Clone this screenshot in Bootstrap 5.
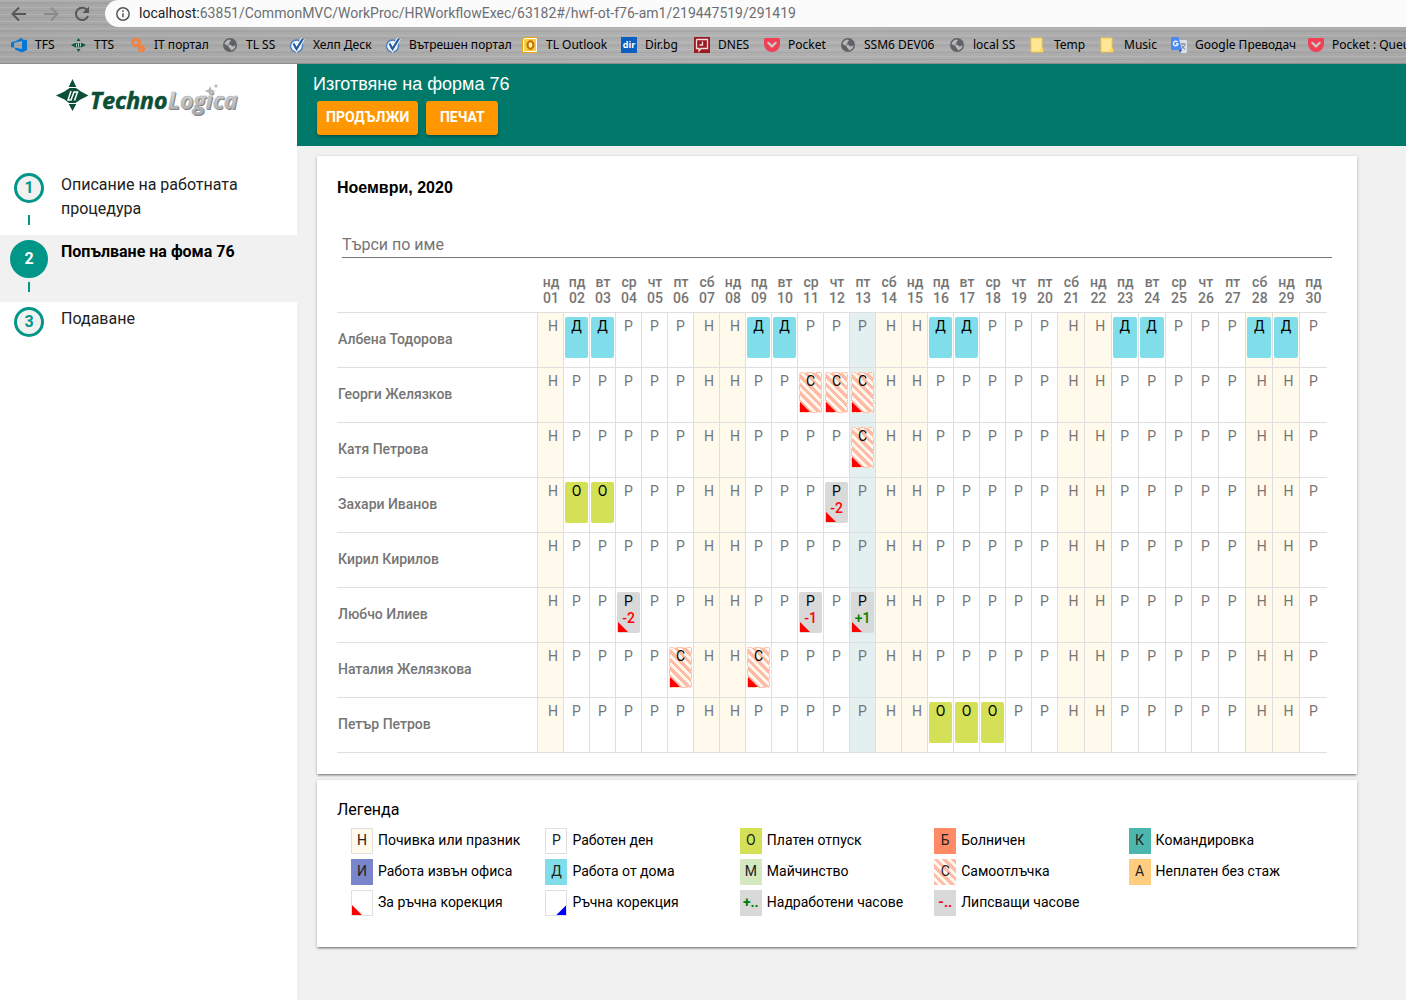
<!DOCTYPE html>
<html lang="bg">
<head>
<meta charset="utf-8">
<meta name="viewport" content="width=device-width, initial-scale=1">
<title>Изготвяне на форма 76</title>
<link href="https://cdn.jsdelivr.net/npm/bootstrap@5.3.0/dist/css/bootstrap.min.css" rel="stylesheet">
<style>
  body { font-family: Roboto, "Noto Sans", sans-serif; font-size: 14px; color: #000; background: #f1f1f1; }

  /* browser chrome */
  .chrome-bar { height: 64px; border-bottom: 1px solid #8c8c8c; font-family: "Noto Sans", sans-serif;
    background:
      repeating-linear-gradient(180deg, rgba(255,255,255,.12) 0 1px, transparent 1px 3px, rgba(0,0,0,.05) 3px 4px, transparent 4px 7px),
      linear-gradient(90deg, #a6a6a6, #b0b0b0 50%, #a8a8a8); }
  .nav-tools { width: 105px; padding-left: 10px; }
  .nav-tools button { width: 32px; line-height: 0; }
  .address { height: 27px; border-radius: 14px 0 0 14px; background: #fbfbfb; padding-left: 10px; font-family: Roboto, sans-serif; font-size: 14px; }
  .address .host { color: #202124; }
  .address .path { color: #6b6f73; }
  .bookmarks { display: grid; height: 36px; padding-left: 11px; align-items: center;
    grid-template-columns: 60px 60px 91px 67px 96px 137px 99px 73px 70px 76px 109px 81px 70px 71px 137px 1fr; }
  .bookmarks a { display: flex; align-items: center; gap: 8px; font-size: 12px; line-height: 16px; color: #000; text-decoration: none; white-space: nowrap; }
  .bookmarks svg { flex: none; }

  /* side navigation */
  .side { width: 297px; background: #fff; }
  .logo { padding: 10px 0 0 52px; height: 104px; }
  .step-item { display: flex; gap: 12px; min-height: 67px; padding: 5px 20px 0 9px; color: #212121; text-decoration: none; font-size: 16px; line-height: 24px; }
  .step-item.current { background: #f1f1f1; color: #000; font-weight: 700; }
  .step-rail { display: grid; flex: none; width: 40px; grid-template-rows: 42px 10px; justify-items: center; align-items: start; align-content: start; }
  .step-dot { width: 30px; height: 30px; border: 3px solid #009688; border-radius: 50%; background: #f1f1f1; color: #009688; font-weight: 700; line-height: 24px; text-align: center; }
  .current .step-dot { width: 38px; height: 38px; background: #009688; color: #fff; line-height: 32px; }
  .step-line { width: 2px; height: 10px; background: #009688; }

  /* page head */
  .page-head { background: #00796b; height: 82px; padding: 8px 16px 0; }
  .page-head h1 { font-family: "Liberation Sans", sans-serif; font-size: 18px; line-height: 24px; font-weight: 400; color: #fff; margin: 0 0 5px; }
  .btn-act { height: 34px; min-width: 72px; padding: 0 9px 2px; border: 0; border-radius: 3px; background: #ff9800; color: #fff; font-size: 14px; font-weight: 700; line-height: 32px; box-shadow: 0 2px 3px rgba(0,0,0,.3); }
  .btn-act:hover { background: #fb8c00; color: #fff; }

  .panels { padding: 10px 49px 0 20px; }
  .panel { background: #fff; box-shadow: 0 2px 2px -1px rgba(0,0,0,.4), 0 1px 3px rgba(0,0,0,.25); }
  .panel-month { padding: 20px 30px 21px 20px; margin-bottom: 6px; }
  .panel-month h2 { font-family: "Liberation Sans", sans-serif; font-size: 16px; line-height: 24px; font-weight: 700; margin: 0 0 32px; }
  .search { margin: 0 -5px 12px 5px; }
  .search input { display: block; width: 100%; height: 26px; border: 0; border-bottom: 1px solid #757575; padding: 0; font-size: 16px; outline: 0; }
  .search input::placeholder { color: #757575; opacity: 1; }

  .sheet { width: 100%; table-layout: fixed; border-collapse: separate; border-spacing: 0; color: #757575; }
  .sheet .c-name { width: 201px; }
  .sheet .c-day { width: 26px; }
  .sheet th, .sheet td { padding: 0; border-bottom: 1px solid #dfdfdf; }
  .sheet thead th { height: 43px; padding-top: 4px; font-weight: 500; font-size: 14px; line-height: 16px; text-align: center; vertical-align: top; }
  .sheet tbody th { height: 55px; font-weight: 500; vertical-align: middle; border-right: 1px solid #dfdfdf; padding: 0 0 2px 1px; }
  .sheet td { height: 55px; vertical-align: top; border-right: 1px solid #dfdfdf; text-align: center; padding: 4px 1px 0; line-height: 18px; }
  .sheet td:last-child { border-right: 0; }
  .sheet td.off { background: #fffaec; }
  .sheet td.today { background: #e4f0f0; }
  .sheet td.off > span { padding-left: 5px; }
  .chip { position: relative; height: 41px; border-radius: 2px; color: #000; line-height: 18px; }
  .chip b { display: block; font-weight: 500; line-height: 16px; }
  .k-home { background: #80deea; }
  .k-leave { background: #d4e157; }
  .k-hours { background: #d9d9d9; }
  .k-absent { background: repeating-linear-gradient(45deg, #ffbba5 0 3px, #fff8ee 3px 6px); }
  .chip.k-absent { border: 1px dashed #ffccbb; line-height: 17px; }
  .k-off { background: #fffaec; border: 1px solid #dfdfdf; }
  .k-work { background: #fff; border: 1px solid #dfdfdf; }
  .k-sick { background: #ff8a65; }
  .k-trip { background: #4db6ac; }
  .k-out { background: #7986cb; }
  .k-mother { background: #d4e9c0; }
  .k-unpaid { background: #ffcc80; }
  .plus { color: #008000; }
  .minus { color: #f00; }
  /* corner marks lie over the chip */
  .mark-red::after, .mark-blue::after { content: ""; position: absolute; bottom: 0; width: 10px; height: 10px; }
  .mark-red::after { left: 0; background: #f00; clip-path: polygon(0 0, 100% 100%, 0 100%); }
  .mark-blue::after { right: 0; background: #00f; clip-path: polygon(100% 0, 100% 100%, 0 100%); }
  .chip.k-hours.mark-red::after { left: 1px; bottom: 1px; }

  .panel-legend { padding: 18px 20px 31px; }
  .panel-legend h2 { font-size: 16px; line-height: 24px; font-weight: 400; margin: 0 0 6px; }
  .legend { display: grid; grid-template-columns: repeat(5, 1fr); row-gap: 5px; margin: 0 14px; padding: 0; list-style: none; }
  .legend li { display: flex; align-items: flex-start; gap: 5px; font-size: 14px; line-height: 24px; white-space: nowrap; }
  .key { position: relative; width: 22px; height: 26px; text-align: center; line-height: 25px; color: #222; }
  .key.k-off, .key.k-work { line-height: 23px; }
  .key.plus { color: #008000; font-weight: 700; }
  .key.minus { color: #f00; font-weight: 700; }
</style>
</head>
<body class="d-flex flex-column min-vh-100">

<svg class="d-none" xmlns="http://www.w3.org/2000/svg">
  <symbol id="i-globe" viewBox="0 0 16 16"><circle cx="8" cy="8" r="7" fill="#5f6368"/><path d="M2.500 7C3 4.500 5 2.700 7.500 2.500L9 3.500 7.500 5v1.500L5.500 7.500 9 8l1 1.500 2.500-.5L13.500 8c0 3-2 5-4.500 5.500L8.500 12 7 10.500 6.500 9z" fill="#b9b9b9"/></symbol>
  <symbol id="i-check" viewBox="0 0 16 16"><circle cx="7.500" cy="9" r="6" fill="#e8f1fa" stroke="#4f7fb8" stroke-width="1.400"/><path d="M4.500 6.500 7.500 12 14 1.500" fill="none" stroke="#fff" stroke-width="4"/><path d="M4.500 6.500 7.500 12 14 1.500" fill="none" stroke="#235a9f" stroke-width="2.200"/></symbol>
  <symbol id="i-pocket" viewBox="0 0 16 16"><path d="M1.500 1h13A1.500 1.500 0 0 1 16 2.500V7a8 8 0 0 1-16 0V2.500A1.500 1.500 0 0 1 1.500 1z" fill="#ef4056"/><path d="m4.300 5.800 3.700 3.600 3.700-3.600" fill="none" stroke="#c9c9c9" stroke-width="2.200" stroke-linecap="round" stroke-linejoin="round"/></symbol>
  <symbol id="i-folder" viewBox="0 0 16 16"><path d="M1 1h11v10l1 1v3H1z" fill="#ffe793" stroke="#f0c94c"/><path d="M9.500 14.500v-2.500h3.500v3z" fill="#ffd75e"/></symbol>
</svg>

<header class="chrome-bar flex-shrink-0 overflow-hidden">
  <div class="d-flex">
    <div class="nav-tools d-flex align-items-center flex-shrink-0">
      <button class="btn p-0 border-0 text-start" aria-label="Назад"><svg width="18" height="18" viewBox="0 0 18 18" fill="none" stroke="#55585b" stroke-width="2"><path d="M16 9H3M9 2.500 2.500 9 9 15.500"/></svg></button>
      <button class="btn p-0 border-0 text-start" aria-label="Напред"><svg width="18" height="18" viewBox="0 0 18 18" fill="none" stroke="#8b8b8b" stroke-width="2"><path d="M2 9h13M9 2.500 15.500 9 9 15.500"/></svg></button>
      <button class="btn p-0 border-0 text-start" aria-label="Презареди"><svg width="18" height="18" viewBox="0 0 18 18"><path d="M14.200 5.200A6.200 6.200 0 1 0 15 11" fill="none" stroke="#55585b" stroke-width="2"/><path d="M16 1.500V8H9.500z" fill="#55585b"/></svg></button>
    </div>
    <div class="address d-flex align-items-center flex-grow-1">
      <svg class="me-2" width="16" height="16" viewBox="0 0 16 16" fill="none" stroke="#55585b" stroke-width="1.500"><circle cx="8" cy="8" r="6.200"/><path d="M8 7.200v4M8 4.300v1.600"/></svg>
      <span class="host">localhost:</span><span class="path">63851/CommonMVC/WorkProc/HRWorkflowExec/63182#/hwf-ot-f76-am1/219447519/291419</span>
    </div>
  </div>
  <nav class="bookmarks" aria-label="Отметки">
    <a href="#"><svg width="16" height="16" viewBox="0 0 16 16"><path fill="#0078d7" fill-rule="evenodd" d="M0 5.500 5 4l6-3.500v1.800l5 1V13l-5 2.500-7-3v-1.500L0 10zM3 6v4.500l8 1.500V4z"/></svg>TFS</a>
    <a href="#"><svg width="15" height="16" viewBox="0 0 15 16"><path fill="#0d5a3c" d="m7.500 1 2 3h-4zM7.500 15l2-3h-4zM0 8l4-2h7l4 2-4 2.200H4z"/><path d="M5.500 9.800V6.500M7.500 10V6M9.500 9.500V6.200" stroke="#a9c9b8"/></svg>TTS</a>
    <a href="#"><svg width="15" height="16" viewBox="0 0 15 16" fill="none" stroke="#f4803c"><circle cx="5" cy="5.500" r="3" stroke-width="2.200"/><circle cx="5" cy="5.500" r="4.300" stroke-width="1.600" stroke-dasharray="2 1.400"/><circle cx="10.500" cy="11.500" r="2" stroke-width="2"/><circle cx="10.500" cy="11.500" r="3.200" stroke-width="1.400" stroke-dasharray="1.600 1"/></svg>IT портал</a>
    <a href="#"><svg width="16" height="16"><use href="#i-globe"/></svg>TL SS</a>
    <a href="#"><svg width="16" height="16"><use href="#i-check"/></svg>Хелп Деск</a>
    <a href="#"><svg width="16" height="16"><use href="#i-check"/></svg>Вътрешен портал</a>
    <a href="#"><svg width="16" height="16" viewBox="0 0 16 16"><path fill="#e8a317" d="M2 0h14v16H0V2z"/><path d="M2.500 1.500h12v13h-13V3z" fill="#f8d048" stroke="#fff"/><ellipse cx="8.500" cy="8" rx="3" ry="3.800" fill="#fff3c4" stroke="#c77400" stroke-width="2.200"/></svg>TL Outlook</a>
    <a href="#"><svg width="16" height="16" viewBox="0 0 16 16"><path fill="#0a5fc0" d="M0 0h16v16H0z"/><text x="8" y="11" text-anchor="middle" font-family="Open Sans, sans-serif" font-weight="700" font-size="9" fill="#fff">dir</text></svg>Dir.bg</a>
    <a href="#"><svg width="16" height="16" viewBox="0 0 16 16"><path fill="#9b1b22" d="M0 0h16v16H0z"/><path d="M3 2.500h10.500v9H7l-2 2.500v-2.500H2.500V3zM8.500 4.500V8H5.500" fill="none" stroke="#f3dcdc" stroke-width="1.300"/></svg>DNES</a>
    <a href="#"><svg width="16" height="16"><use href="#i-pocket"/></svg>Pocket</a>
    <a href="#"><svg width="16" height="16"><use href="#i-globe"/></svg>SSM6 DEV06</a>
    <a href="#"><svg width="16" height="16"><use href="#i-globe"/></svg>local SS</a>
    <a href="#"><svg width="16" height="16"><use href="#i-folder"/></svg>Temp</a>
    <a href="#"><svg width="16" height="16"><use href="#i-folder"/></svg>Music</a>
    <a href="#"><svg width="16" height="16" viewBox="0 0 16 16"><path d="M6 3h9a1 1 0 0 1 1 1v11a1 1 0 0 1-1 1H9z" fill="#dcdfe3"/><path d="M9.500 7h5M12 6v1M14 7.500c-.8 2-2 3.200-3.800 4.500M10.500 8.500l3.500 4" stroke="#6b7f8a" fill="none"/><path d="M1 0h6.500L11 13H1a1 1 0 0 1-1-1V1a1 1 0 0 1 1-1z" fill="#4a8af4"/><path d="M8 13h3l-2 3z" fill="#2a50b8"/><path d="M6.500 5A2.300 2.300 0 1 0 7 6.800H4.800" fill="none" stroke="#fff" stroke-width="1.200"/></svg>Google Преводач</a>
    <a href="#"><svg width="16" height="16"><use href="#i-pocket"/></svg>Pocket : Queu</a>
  </nav>
</header>

<div class="d-flex flex-grow-1">
  <aside class="side flex-shrink-0">
    <div class="logo">
      <svg width="190" height="48" viewBox="0 0 190 48" role="img" aria-label="TechnoLogica">
        <defs><linearGradient id="silver" x1="0" y1="0" x2="0" y2="1"><stop offset="0" stop-color="#e6e6e6"/><stop offset="1" stop-color="#a3a5a8"/></linearGradient></defs>
        <path fill="#0b4f37" d="m20.500 5 3.800 8h-7.600zM20.500 37l3.800-7h-7.600zM4 21.500l8.500-4 5-3.500h6.500l5 3.500 7.500 4-8 4-5 3.500H17l-4.500-3.500z"/>
        <path d="m19 17-3 9h3l3-8h3.500l-3 8.500" fill="none" stroke="#fff" stroke-width="1.500"/>
        <g font-family="Open Sans, sans-serif" font-style="italic" font-weight="700" font-size="23">
          <text x="38" y="35" fill="#0b4f37" stroke="#0b4f37" stroke-width=".6">Techno</text>
          <text x="117" y="36" fill="#77797c">Logica</text>
          <text x="116" y="35" fill="url(#silver)" stroke="#a9abad" stroke-width=".5">Logica</text>
        </g>
        <path d="m158 12 1.500 3.500 4 1.500-4 1.500L158 22l-1.500-3.500-4-1.500 4-1.500zM164 9.500l.8 1.700 1.700.8-1.700.8-.8 1.700-.8-1.700-1.700-.8 1.700-.8z" fill="#b5b7ba"/>
      </svg>
    </div>
    <nav aria-label="Стъпки">
      <a class="step-item" href="#"><span class="step-rail"><span class="step-dot">1</span><span class="step-line"></span></span><span>Описание на работната процедура</span></a>
      <a class="step-item current" href="#" aria-current="step"><span class="step-rail"><span class="step-dot">2</span><span class="step-line"></span></span><span>Попълване на фома 76</span></a>
      <a class="step-item" href="#"><span class="step-rail"><span class="step-dot">3</span></span><span>Подаване</span></a>
    </nav>
  </aside>

  <main class="flex-grow-1">
    <div class="page-head">
      <h1>Изготвяне на форма 76</h1>
      <div class="d-flex gap-2 ps-1">
        <button type="button" class="btn btn-act">ПРОДЪЛЖИ</button>
        <button type="button" class="btn btn-act">ПЕЧАТ</button>
      </div>
    </div>
    <div class="panels">
      <section class="panel panel-month">
        <h2>Ноември, 2020</h2>
        <div class="search">
          <label class="visually-hidden" for="find">Търси по име</label>
          <input id="find" type="text" placeholder="Търси по име">
        </div>
        <table class="sheet">
          <colgroup><col class="c-name"><col class="c-day" span="20"><col span="10"></colgroup>
          <thead><tr id="days"><th></th></tr></thead>
          <tbody id="people"></tbody>
        </table>
      </section>

      <section class="panel panel-legend">
        <h2>Легенда</h2>
        <ul class="legend">
          <li><span class="key k-off">Н</span>Почивка или празник</li>
          <li><span class="key k-work">Р</span>Работен ден</li>
          <li><span class="key k-leave">О</span>Платен отпуск</li>
          <li><span class="key k-sick">Б</span>Болничен</li>
          <li><span class="key k-trip">К</span>Командировка</li>
          <li><span class="key k-out">И</span>Работа извън офиса</li>
          <li><span class="key k-home">Д</span>Работа от дома</li>
          <li><span class="key k-mother">М</span>Майчинство</li>
          <li><span class="key k-absent">С</span>Самоотлъчка</li>
          <li><span class="key k-unpaid">А</span>Неплатен без стаж</li>
          <li><span class="key k-work mark-red"></span>За ръчна корекция</li>
          <li><span class="key k-work mark-blue"></span>Ръчна корекция</li>
          <li><span class="key k-hours plus">+..</span>Надработени часове</li>
          <li><span class="key k-hours minus">-..</span>Липсващи часове</li>
        </ul>
      </section>
    </div>
  </main>
</div>

<script>
  // 1 November 2020 is a Sunday
  const names = ['нд', 'пд', 'вт', 'ср', 'чт', 'пт', 'сб'];
  const today = 13;
  const people = [
    ['Албена Тодорова', { 2: 'Д', 3: 'Д', 9: 'Д', 10: 'Д', 16: 'Д', 17: 'Д', 23: 'Д', 24: 'Д', 28: 'Д', 29: 'Д' }],
    ['Георги Желязков', { 11: 'С', 12: 'С', 13: 'С' }],
    ['Катя Петрова', { 13: 'С' }],
    ['Захари Иванов', { 2: 'О', 3: 'О', 12: '-2' }],
    ['Кирил Кирилов', {}],
    ['Любчо Илиев', { 4: '-2', 11: '-1', 13: '+1' }],
    ['Наталия Желязкова', { 6: 'С', 9: 'С' }],
    ['Петър Петров', { 16: 'О', 17: 'О', 18: 'О' }]
  ];
  const chip = v => {
    if (v === 'Д') return '<div class="chip k-home">Д</div>';
    if (v === 'О') return '<div class="chip k-leave">О</div>';
    if (v === 'С') return '<div class="chip k-absent mark-red">С</div>';
    return `<div class="chip k-hours mark-red">Р<b class="${v[0] === '+' ? 'plus' : 'minus'}">${v}</b></div>`;
  };
  let head = '';
  for (let d = 1; d <= 30; d++) head += `<th scope="col">${names[(d - 1) % 7]}<br>${String(d).padStart(2, '0')}</th>`;
  document.getElementById('days').insertAdjacentHTML('beforeend', head);
  document.getElementById('people').innerHTML = people.map(([name, marks]) => {
    let row = `<th scope="row">${name}</th>`;
    for (let d = 1; d <= 30; d++) {
      const off = (d - 1) % 7 === 0 || (d - 1) % 7 === 6;
      const cls = d === today ? 'today' : off ? 'off' : '';
      row += `<td class="${cls}">${marks[d] ? chip(marks[d]) : `<span>${off ? 'Н' : 'Р'}</span>`}</td>`;
    }
    return `<tr>${row}</tr>`;
  }).join('');
</script>
<script src="https://cdn.jsdelivr.net/npm/bootstrap@5.3.0/dist/js/bootstrap.bundle.min.js"></script>
</body>
</html>
